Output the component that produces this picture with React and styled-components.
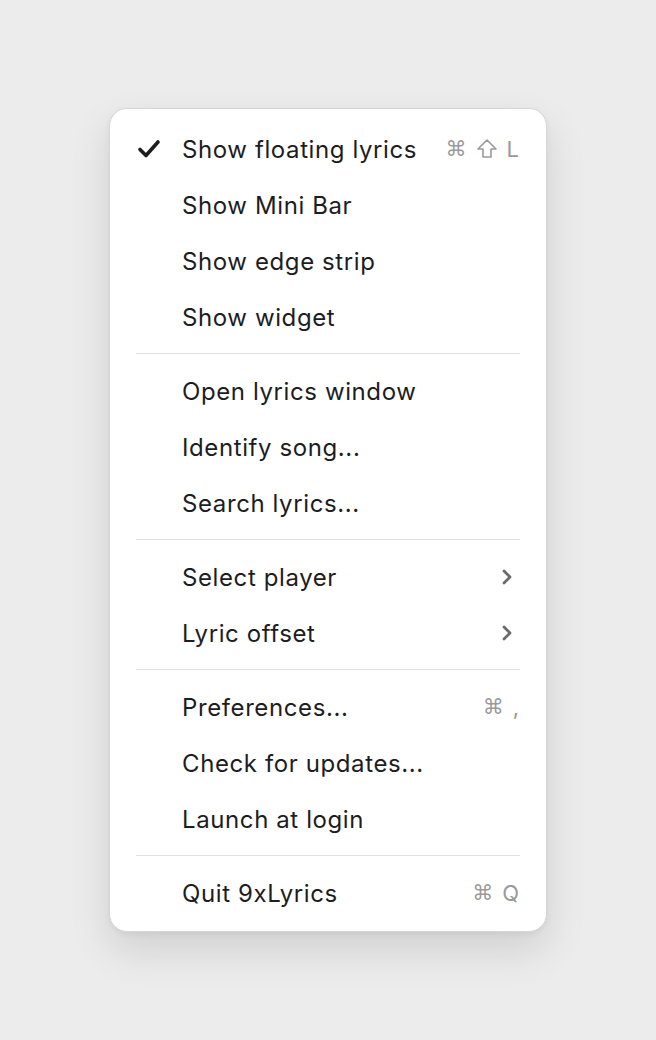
import React from "react";
import styled, { createGlobalStyle } from "styled-components";

const GlobalStyle = createGlobalStyle`
  html, body {
    margin: 0;
    padding: 0;
    background: #ececec;
  }
  body {
    font-family: Inter, "Noto Sans", "Liberation Sans", sans-serif;
    -webkit-font-smoothing: antialiased;
  }
`;

const sections = [
  [
    { label: "Show floating lyrics", checked: true, keys: ["⌘", "shift", "L"] },
    { label: "Show Mini Bar" },
    { label: "Show edge strip" },
    { label: "Show widget" },
  ],
  [
    { label: "Open lyrics window" },
    { label: "Identify song..." },
    { label: "Search lyrics..." },
  ],
  [
    { label: "Select player", submenu: true },
    { label: "Lyric offset", submenu: true },
  ],
  [
    { label: "Preferences...", keys: ["⌘", ","] },
    { label: "Check for updates..." },
    { label: "Launch at login" },
  ],
  [{ label: "Quit 9xLyrics", keys: ["⌘", "Q"] }],
];

const CheckIcon = () => (
  <svg width="24" height="22" viewBox="0 0 24 22">
    <path
      d="M3 11.5 L9 17.5 L21 4"
      fill="none"
      stroke="#1d1d1f"
      strokeWidth="3.6"
      strokeLinecap="round"
      strokeLinejoin="round"
    />
  </svg>
);

const ShiftIcon = () => (
  <svg width="22" height="22" viewBox="0 0 22 22">
    <path
      d="M11 2 L20 11 H15 V19 H7 V11 H2 Z"
      fill="none"
      stroke="#9a9a9a"
      strokeWidth="1.6"
      strokeLinejoin="round"
    />
  </svg>
);

const Chevron = () => (
  <svg width="12" height="18" viewBox="0 0 12 18">
    <path
      d="M3 3 L9 9 L3 15"
      fill="none"
      stroke="#6b6b6b"
      strokeWidth="2.8"
      strokeLinecap="round"
      strokeLinejoin="round"
    />
  </svg>
);

const App = () => {
  return (
    <Page>
      <GlobalStyle />
      <Menu>
        {sections.map((items, si) => (
          <React.Fragment key={si}>
            {si > 0 && <Separator />}
            {items.map((item) => (
              <Row key={item.label}>
                <CheckCell>{item.checked && <CheckIcon />}</CheckCell>
                <Label>{item.label}</Label>
                {item.keys && (
                  <Shortcut>
                    {item.keys.map((k, i) =>
                      k === "shift" ? (
                        <ShiftIcon key={i} />
                      ) : (
                        <Key key={i} $symbol={k === "⌘"}>
                          {k}
                        </Key>
                      )
                    )}
                  </Shortcut>
                )}
                {item.submenu && (
                  <SubArrow>
                    <Chevron />
                  </SubArrow>
                )}
              </Row>
            ))}
          </React.Fragment>
        ))}
      </Menu>
    </Page>
  );
};

export default App;

const Page = styled.div`
  padding: 108px 0 0 109px;
  min-height: 1040px;
  box-sizing: border-box;
`;

const Menu = styled.div`
  width: 438px;
  box-sizing: border-box;
  background: #ffffff;
  border: 1px solid #d6d6d6;
  border-radius: 18px;
  padding: 12px 26px 10px 26px;
  box-shadow: 0 18px 40px rgba(0, 0, 0, 0.12), 0 2px 6px rgba(0, 0, 0, 0.05);
`;

const Row = styled.div`
  display: flex;
  align-items: center;
  height: 56px;
`;

const CheckCell = styled.div`
  width: 45px;
  flex: none;
  display: flex;
  align-items: center;
  padding-left: 1px;
`;

const Label = styled.div`
  flex: 1;
  font-size: 24px;
  color: #1d1d1f;
  letter-spacing: 0.6px;
`;

const Shortcut = styled.div`
  display: flex;
  align-items: center;
  gap: 9px;
  color: #9a9a9a;
  font-size: 21px;
  margin-right: 1px;
`;

const Key = styled.span`
  font-family: ${(p) => (p.$symbol ? '"DejaVu Sans", sans-serif' : 'Inter, "Liberation Sans", sans-serif')};
  font-size: ${(p) => (p.$symbol ? "21px" : "22px")};
  line-height: 1;
`;

const SubArrow = styled.div`
  display: flex;
  align-items: center;
  margin-right: 7px;
`;

const Separator = styled.div`
  height: 1px;
  background: #e2e2e2;
  margin: 8px 0 9px;
`;
